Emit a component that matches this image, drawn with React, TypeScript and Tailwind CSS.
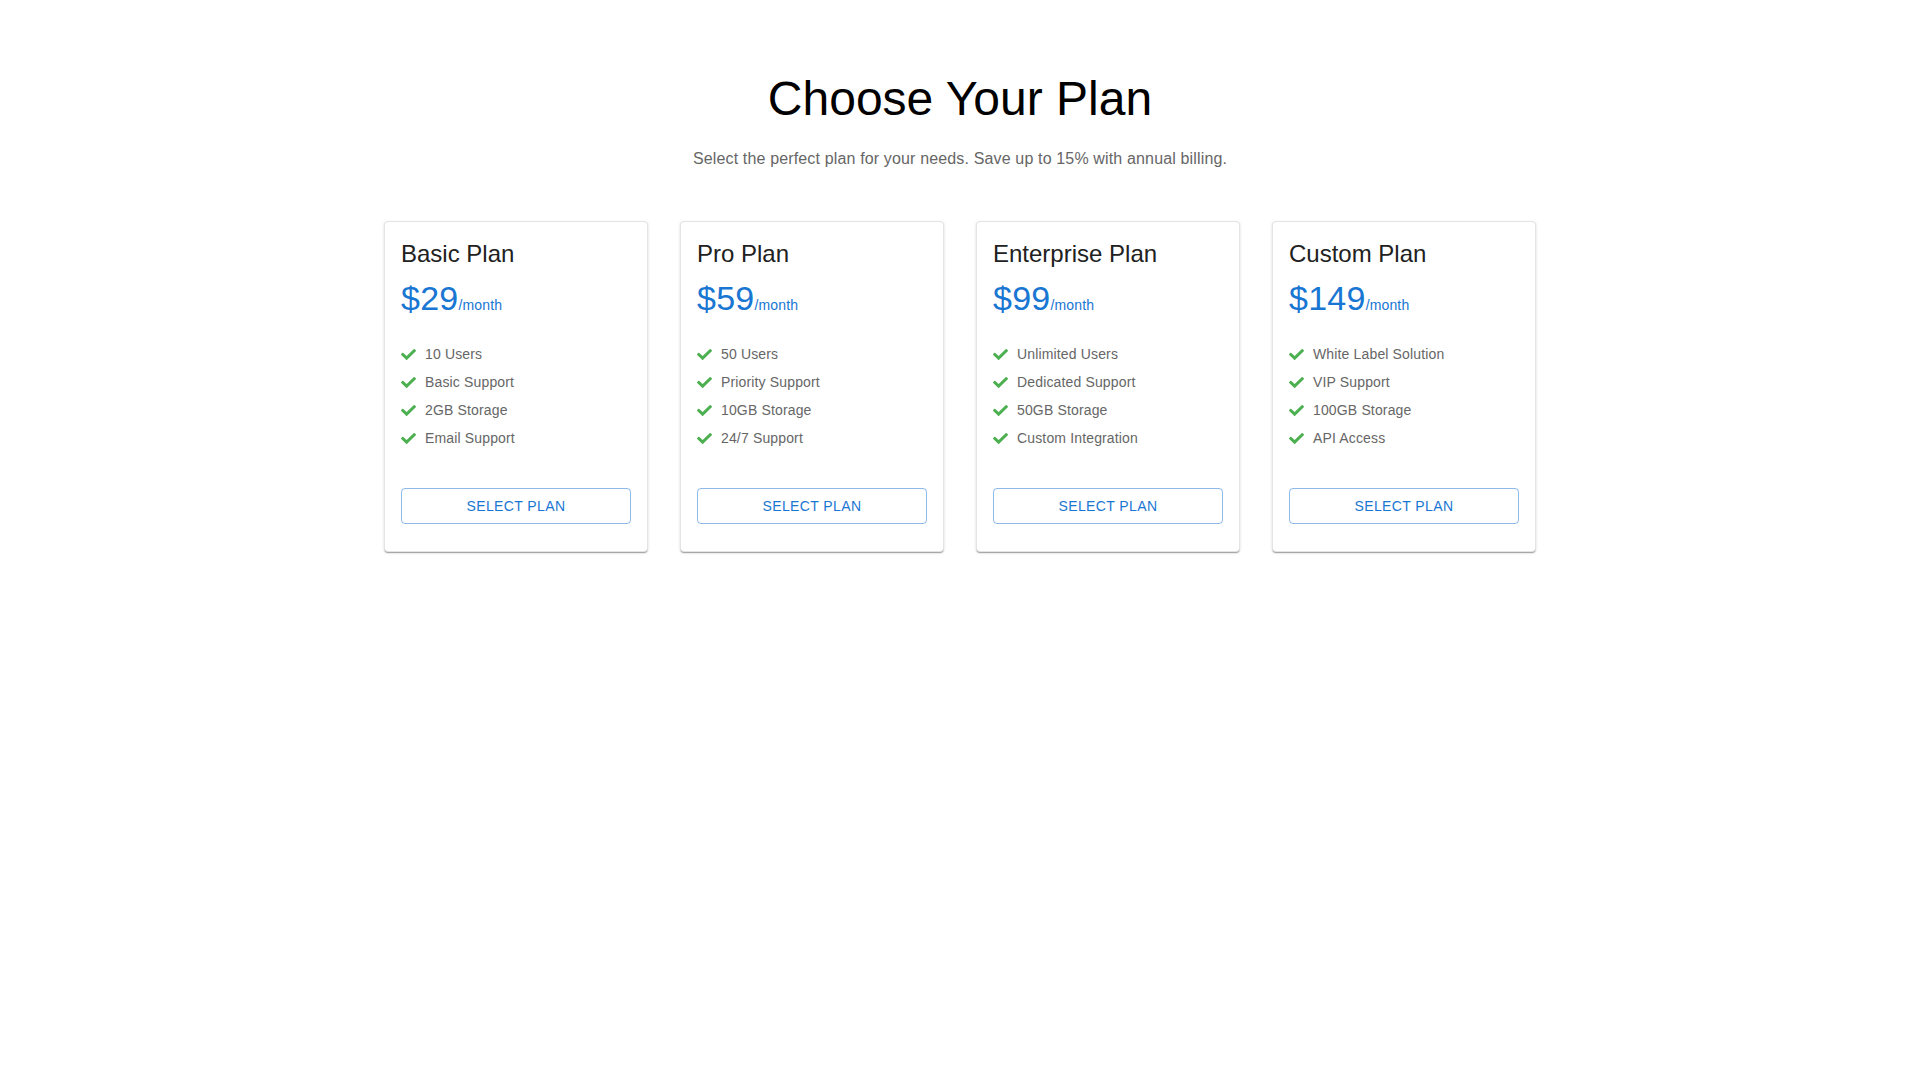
const plans = [
  { name: 'Basic Plan', price: '$29', features: ['10 Users', 'Basic Support', '2GB Storage', 'Email Support'] },
  { name: 'Pro Plan', price: '$59', features: ['50 Users', 'Priority Support', '10GB Storage', '24/7 Support'] },
  { name: 'Enterprise Plan', price: '$99', features: ['Unlimited Users', 'Dedicated Support', '50GB Storage', 'Custom Integration'] },
  { name: 'Custom Plan', price: '$149', features: ['White Label Solution', 'VIP Support', '100GB Storage', 'API Access'] },
]

function Check() {
  return (
    <svg width="15" height="11" viewBox="0 64 512 384" preserveAspectRatio="none" className="shrink-0" aria-hidden="true">
      <path
        d="M173.898 439.404l-166.4-166.4c-9.997-9.997-9.997-26.206 0-36.204l36.203-36.204c9.997-9.998 26.207-9.998 36.204 0L192 312.69 432.095 72.596c9.997-9.997 26.207-9.997 36.204 0l36.203 36.204c9.997 9.997 9.997 26.206 0 36.204l-294.4 294.401c-9.998 9.997-26.207 9.997-36.204-.001z"
        fill="#4caf50"
      />
    </svg>
  )
}

function PlanCard({ name, price, features }: { name: string; price: string; features: string[] }) {
  return (
    <div className="flex flex-col bg-white rounded border border-[#e4e4e4] px-4 pt-4 pb-[27px] shadow-[0px_2px_1px_-1px_rgba(0,0,0,0.2),0px_1px_1px_0px_rgba(0,0,0,0.14),0px_1px_3px_0px_rgba(0,0,0,0.12)]">
      <h2 className="text-[24px] leading-[32px] text-[#212121] mb-2">{name}</h2>
      <div className="text-[#1976d2] -mt-px">
        <span className="text-[34px] leading-[42px] tracking-[0.25px]">{price}</span>
        <span className="text-[14px] tracking-[0.15px]">/month</span>
      </div>
      <ul className="mt-[21px]">
        {features.map(f => (
          <li key={f} className="flex items-center h-7 text-[14px] tracking-[0.15px] text-[#666666]">
            <Check />
            <span className="ml-[9px]">{f}</span>
          </li>
        ))}
      </ul>
      <button
        type="button"
        className="mt-9 h-9 w-full rounded border border-[rgba(25,118,210,0.5)] text-[14px] uppercase tracking-[0.4px] text-[#1976d2] hover:bg-[rgba(25,118,210,0.04)]"
      >
        Select Plan
      </button>
    </div>
  )
}

export default function App() {
  return (
    <div className="min-h-screen bg-white font-['Liberation_Sans',Arial,sans-serif]">
      <div className="mx-auto w-[1152px] pt-[71px]">
        <h1 className="text-center text-[48px] leading-[56px] text-black">Choose Your Plan</h1>
        <p className="mt-5 text-center text-[16px] leading-6 tracking-[0.15px] text-[#666666]">
          Select the perfect plan for your needs. Save up to 15% with annual billing.
        </p>
        <div className="mt-[50px] grid grid-cols-4 gap-8">
          {plans.map(p => (
            <PlanCard key={p.name} {...p} />
          ))}
        </div>
      </div>
    </div>
  )
}
